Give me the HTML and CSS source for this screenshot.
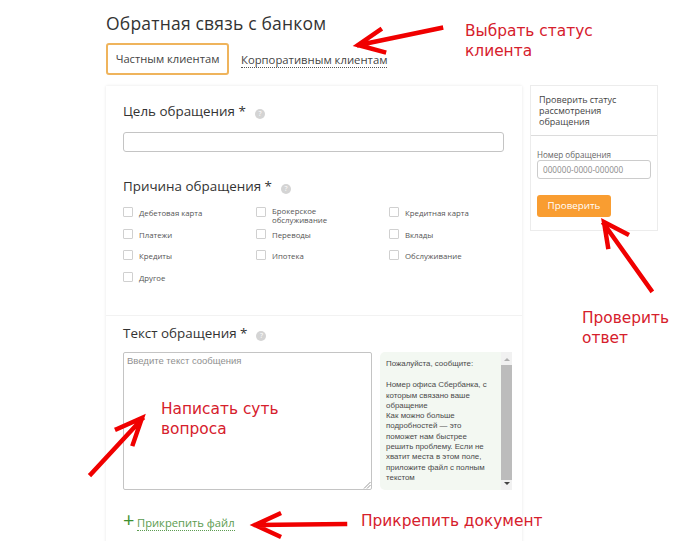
FILE: index.html
```html
<!DOCTYPE html>
<html lang="ru">
<head>
<meta charset="utf-8">
<title>Обратная связь с банком</title>
<link rel="stylesheet" href="styles.css">
</head>
<body>
<div class="page">
  <h1 class="title">Обратная связь с банком</h1>
  <div class="tabs">
    <div class="tab-active">Частным клиентам</div>
    <div class="tab-link">Корпоративным клиентам</div>
  </div>
  <div class="columns">
    <main class="card">
      <section class="sec-top">
        <h2 class="label">Цель обращения *<span class="help">?</span></h2>
        <div class="input-main"></div>
        <h2 class="label label-reason">Причина обращения *<span class="help">?</span></h2>
        <div class="checks">
          <div class="check"><span class="box"></span><span>Дебетовая карта</span></div>
          <div class="check"><span class="box"></span><span>Брокерское обслуживание</span></div>
          <div class="check"><span class="box"></span><span>Кредитная карта</span></div>
          <div class="check"><span class="box"></span><span>Платежи</span></div>
          <div class="check"><span class="box"></span><span>Переводы</span></div>
          <div class="check"><span class="box"></span><span>Вклады</span></div>
          <div class="check"><span class="box"></span><span>Кредиты</span></div>
          <div class="check"><span class="box"></span><span>Ипотека</span></div>
          <div class="check"><span class="box"></span><span>Обслуживание</span></div>
          <div class="check"><span class="box"></span><span>Другое</span></div>
        </div>
      </section>
      <section class="sec-text">
        <h2 class="label">Текст обращения *<span class="help">?</span></h2>
        <div class="msg-row">
          <div class="textarea">Введите текст сообщения
            <svg class="grip" width="8" height="8" viewBox="0 0 8 8"><path d="M1 7.5L7.5 1M4 7.5L7.5 4" stroke="#999" stroke-width="1" fill="none"/></svg>
          </div>
          <div class="hint">
            <div class="hint-text">
              <p>Пожалуйста, сообщите:</p>
              <p>Номер офиса Сбербанка, с которым связано ваше обращение<br>Как можно больше подробностей — это поможет нам быстрее решить проблему. Если не хватит места в этом поле, приложите файл с полным текстом</p>
            </div>
            <div class="scrollbar">
              <span class="arrow-up"></span>
              <span class="thumb"></span>
              <span class="arrow-down"></span>
            </div>
          </div>
        </div>
        <div class="attach"><span class="plus">+</span><span class="attach-link">Прикрепить файл</span></div>
      </section>
    </main>
    <aside class="side">
      <div class="side-head">Проверить статус рассмотрения обращения</div>
      <div class="side-body">
        <div class="side-label">Номер обращения</div>
        <div class="side-input">000000-0000-000000</div>
        <div class="btn">Проверить</div>
      </div>
    </aside>
  </div>
</div>
<svg class="arrows" width="700" height="541" viewBox="0 0 700 541">
  <g fill="none" stroke="#f00000" stroke-width="4.5" stroke-linecap="square" stroke-linejoin="miter">
    <path d="M441 28L359 45M380 30L358 45L384 52"/>
    <path d="M651 290L604 224M627 234L604 222L608 247"/>
    <path d="M91 474L142 419M117 429L142 418L133 444"/>
    <path d="M345 524L256 525M279 514L255 525L279 536"/>
  </g>
</svg>
<div class="note note-status">Выбрать статус<br>клиента</div>
<div class="note note-check">Проверить<br>ответ</div>
<div class="note note-write">Написать суть<br>вопроса</div>
<div class="note note-attach">Прикрепить документ</div>
</body>
</html>
```
FILE: styles.css
```css
* { box-sizing: border-box; }
html, body { margin: 0; height: 541px; overflow: hidden; background: #fff; }
body { position: relative; font-family: "Open Sans", sans-serif; color: #333; }
.page { padding: 13px 0 0 106px; }
.title { margin: 0; font-size: 17.5px; line-height: 21px; font-weight: 400; color: #333; letter-spacing: 0.2px; }
.tabs { display: flex; align-items: center; margin-top: 9px; height: 32px; }
.tab-active { width: 123px; height: 32px; border: 2px solid #efb45c; border-radius: 3px; font-size: 11.2px; line-height: 28px; text-align: center; color: #444; }
.tab-link { margin-left: 12px; margin-top: 2px; font-size: 11.3px; line-height: 14px; color: #444; border-bottom: 1px dotted #555; }
.columns { display: flex; align-items: flex-start; margin-top: 10px; }
.card { width: 416px; height: 500px; box-shadow: 0 0 3px rgba(0,0,0,.1); background: #fff; margin-top: 1px; }
.sec-top { height: 230px; padding: 15px 18px 0 17px; border-bottom: 1px solid #f2f2f2; }
.label { margin: 0; font-size: 13.4px; line-height: 20px; font-weight: 400; color: #333; display: flex; align-items: center; }
.help { width: 10px; height: 10px; margin-left: 9px; margin-top: 5px; border-radius: 50%; background: #d4d4d4; color: #fff; font-size: 7px; line-height: 10px; text-align: center; }
.input-main { width: 381px; height: 20px; margin-top: 11px; border: 1px solid #c4c4c4; border-radius: 3px; }
.label-reason { margin-top: 24px; }
.checks { display: grid; grid-template-columns: repeat(3, 133px); margin-top: 11px; grid-auto-rows: 21.5px; }
.check { display: flex; align-items: flex-start; font-size: 7.8px; line-height: 9px; color: #555; }
.box { flex: none; width: 10px; height: 10px; margin-right: 6px; border: 1px solid #d0d0d0; border-radius: 1px; }
.check span:last-child { padding-top: 2px; width: 90px; }
.check:nth-child(2) span:last-child { padding-top: 0; }
.sec-text { padding: 7px 10px 0 17px; }
.msg-row { display: flex; margin-top: 9px; }
.textarea { position: relative; width: 249px; height: 138px; border: 1px solid #c4c4c4; border-radius: 2px; padding: 1px 3px 0; font-size: 9.5px; line-height: 13px; color: #8f8f8f; font-family: "Liberation Sans", sans-serif; }
.grip { position: absolute; right: 0; bottom: 0; }
.hint { display: flex; width: 132px; height: 138px; margin-left: 8px; background: #f3f8f2; border-radius: 5px 0 0 5px; }
.hint-text { flex: 1; padding: 7px 10px 0 6px; font-family: "Liberation Sans", sans-serif; font-size: 7.9px; line-height: 10.3px; color: #4a4a4a; }
.hint-text p { margin: 0 0 11px; }
.scrollbar { flex: none; width: 11px; display: flex; flex-direction: column; align-items: center; background: #f1f1f1; }
.arrow-up { margin: 6px 0 4px; border: 3px solid transparent; border-top: 0; border-bottom: 3px solid #b0b0b0; }
.thumb { flex: 1; width: 11px; background: #bcbcbc; }
.arrow-down { margin: 2px 0 5px; border: 3px solid transparent; border-bottom: 0; border-top: 3px solid #444; }
.attach { display: flex; align-items: baseline; margin-top: 20px; }
.plus { font-size: 20px; line-height: 20px; width: 14px; font-weight: 400; color: #3d8f30; }
.attach-link { font-size: 11.2px; line-height: 14px; color: #5c9c50; border-bottom: 1px dotted #5c9c50; }
.side { width: 128px; height: 146px; margin-left: 8px; border: 1px solid #ececec; }
.side-head { height: 50px; padding: 8px 8px 0 8px; font-size: 9px; line-height: 11px; color: #444; border-bottom: 1px solid #dcdcdc; }
.side-body { padding: 13px 6px 0 6px; }
.side-label { font-size: 8.1px; line-height: 11px; color: #666; }
.side-input { width: 114px; height: 19px; border: 1px solid #ccc; border-radius: 3px; padding-left: 5px; font-size: 8.2px; line-height: 17px; color: #8a8a8a; }
.btn { width: 74px; height: 22px; margin-top: 16px; background: #f99d31; border-radius: 3px; color: #fff; font-size: 9.8px; line-height: 22px; text-align: center; }
.arrows { position: absolute; left: 0; top: 0; pointer-events: none; }
.note { position: absolute; font-family: "DejaVu Sans", sans-serif; font-size: 15.4px; line-height: 20px; color: #d6202c; white-space: nowrap; }
.note-status { left: 465px; top: 21px; }
.note-check { left: 582px; top: 308px; }
.note-write { left: 161px; top: 399px; }
.note-attach { left: 361px; top: 511px; }
```
